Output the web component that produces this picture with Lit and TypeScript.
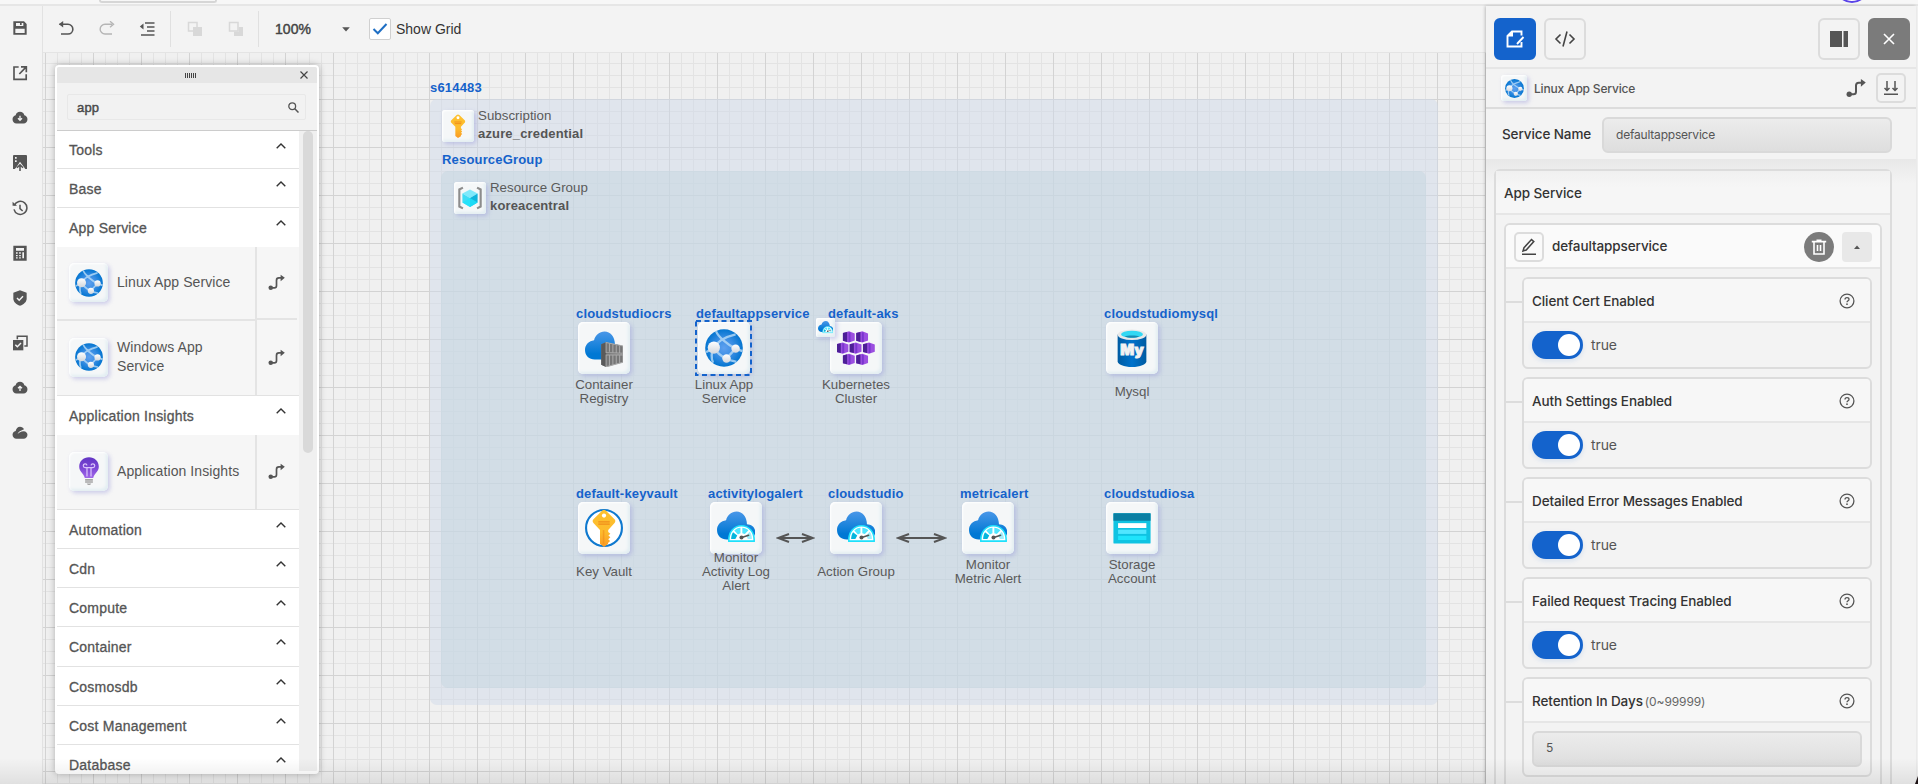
import { LitElement, html, svg, css, nothing } from "lit";
import { customElement } from "lit/decorators.js";
import { styleMap } from "lit/directives/style-map.js";

const cloud = svg`<path fill="url(#gc)" d="M14.2 7.2C14.1 3.6 12 1.2 9.3 1.2 6.8 1.2 4.9 2.9 4.3 5.3 1.9 5.6 0 7.4 0 9.9c0 2.7 2 4.5 4.6 4.5H14c2.4 0 4.1-1.4 4.1-3.6 0-2-1.6-3.500-3.900-3.600z"/>`;
const defs = svg`<defs>
  <linearGradient id="gc" x1="0" y1="0" x2="0" y2="1"><stop offset="0" stop-color="#4a97e8"/><stop offset=".8" stop-color="#0078d4"/></linearGradient>
  <radialGradient id="gw"><stop offset="0" stop-color="#5ea0ef"/><stop offset=".5" stop-color="#3b8ee4"/><stop offset="1" stop-color="#0375d0"/></radialGradient>
  <linearGradient id="gk" x1="0" y1="0" x2="0" y2="1"><stop offset="0" stop-color="#fdc12f"/><stop offset=".6" stop-color="#fdbb2c"/><stop offset="1" stop-color="#fa9a24"/></linearGradient>
  <linearGradient id="gp" x1="0" y1="0" x2="0" y2="1"><stop offset="0" stop-color="#6236c4"/><stop offset=".5" stop-color="#7c46d4"/><stop offset="1" stop-color="#a067ea"/></linearGradient>
  <linearGradient id="gm"><stop offset="0" stop-color="#005ba1"/><stop offset=".5" stop-color="#0072cc"/><stop offset="1" stop-color="#005ba1"/></linearGradient>
  <linearGradient id="gn" x1="0" y1="0" x2="0" y2="1"><stop offset="0" stop-color="#fff"/><stop offset="1" stop-color="#d2d6dc"/></linearGradient>
</defs>`;

const gauge = svg`<path fill="#fff" stroke="#1ee0fb" stroke-width=".75" d="M5.600 15.200C5.400 11 8 7.900 11.600 7.900s6.200 3.100 6 7.300z"/>
  <path fill="#05b6dd" d="M6.700 14.200c0-1.200.3-2.300.9-3.200l2 1.600-.9 1.600z"/><path fill="#50e6ff" d="M8.200 10.200c.8-.8 1.700-1.200 2.900-1.300v2.600l-1.200.6zM12 8.900c1.100.1 2 .5 2.900 1.200l-1.700 1.800-1.200-.4z"/><path fill="#9feefc" d="M15.500 10.800c.7.900 1 2 1 3.400h-1.900l-.8-1.800z"/>
  <path stroke="#555" stroke-width=".7" stroke-linecap="round" d="M11.700 13.500l3.300-1.100"/><circle cx="11.600" cy="13.500" r=".95" fill="#555"/>`;

const hexes: number[][] = [[3, 1], [9.300, 1], [0, 6.300], [6.200, 6.300], [12.500, 6.300], [3, 11.600], [9.300, 11.600]];

const pics: Record<string, unknown> = {
  web: svg`<circle cx="9" cy="9" r="8.900" fill="url(#gw)"/>
    <g fill="none" stroke="#b9dcf8" stroke-width="1.100" opacity=".8"><path d="M5.200 1c1 2.500 5 6.200 9.300 8.300M4.200 8.800c1.500-2.600 5-5 10.300-6.300M4.200 8.800c1.600 2.600 3.800 4.300 5.900 5.200M10.100 14l4.400-4.700M14.500 9.300l3.200 1.200M4.200 8.800L.5 11M10.100 14c1.500 1 3 1.200 4.800 1.500M4.200 8.800C3 11 3 14 3.800 16"/></g>
    <circle cx="4.200" cy="8.800" r="2.900" fill="url(#gn)"/><circle cx="14.500" cy="9.300" r="2" fill="url(#gn)"/><circle cx="10.200" cy="14" r="2" fill="url(#gn)"/>`,
  registry: svg`${cloud}<path fill="#767676" d="M7.700 7.200l2.300-.9 8 1.700v7.800l-8 2.200-2.300-1.100z"/><path fill="#5a5a5a" d="M7.700 7.200l2.300-.9v11.700l-2.300-1.100z"/>
    <path fill="none" stroke="#a8a8a8" stroke-width=".5" d="M10 6.400l8 1.700v3.400l-8-.4zM10 12.300l8-.1v3.500l-8 2.200zM11.600 7v3.800M13.200 7.300v3.700M14.800 7.700v3.400M16.400 8v3.400M11.600 12.500v4.700M13.200 12.500v4.300M14.800 12.500v3.900M16.400 12.400v3.600"/>`,
  aks: hexes.map(([x, y]) => svg`<g transform="translate(${x - 0.400} ${y - 0.100})"><path fill="#9b4fe0" d="M.2 1l2.900-.8 2.700 1v3.400l-2.700.9-2.900-.8z"/><path fill="#4c1f96" d="M.2 1l2-.5v4.700L.2 4.700z"/><path fill="#7a35cf" d="M2.900.6l.9.200v4.300l-.9.200z"/></g>`),
  mysql: svg`<path fill="url(#gm)" d="M2.200 2.600v12.800c0 1.400 3 2.600 6.800 2.600s6.800-1.200 6.800-2.600V2.600z"/><ellipse cx="9" cy="2.700" rx="6.800" ry="2.500" fill="#e8e8e8"/><ellipse cx="9" cy="2.500" rx="5.200" ry="1.700" fill="#32d8f3"/><path fill="#198ab3" d="M5.600 3.600c1-.7 5.800-.7 6.800 0-1.500.8-5.300.8-6.800 0z"/>
    <text x="9" y="12.100" text-anchor="middle" font-family="Inter, sans-serif" font-weight="900" font-size="6.900" fill="#f2f2f2" stroke="#f2f2f2" stroke-width=".4">My</text>`,
  vault: svg`<circle cx="9" cy="9" r="8.500" fill="#fff" stroke="#0f79cf" stroke-width="1"/><path fill="url(#gk)" d="M8.200.7c.5-.5 1.100-.5 1.600 0l4.200 4.200c.5.500.5 1.200 0 1.700L11 10v.9l1 .8-.9.8.9.9-1 .9.900.9-1 .9v.5L9 18l-1.900-1.500V10L4 6.600c-.5-.5-.5-1.200 0-1.700z"/><circle cx="9" cy="3.100" r="1" fill="#fff"/><path stroke="#f08d1a" stroke-width=".6" d="M6.300 6.100h5.400M6.300 7.200h5.400"/><path stroke="#f08d1a" stroke-width=".7" opacity=".6" d="M8.800 10v6.600"/>`,
  key: svg`<path fill="url(#gk)" d="M8 .7c.6-.5 1.400-.5 2 0l4 4c.5.500.5 1.400 0 1.900L11.200 9.600v1l.9.800-.8.800.8 1-.8.900.8.900-.9.900v.7L9 18l-2-1.500V9.600L4 6.600c-.5-.5-.5-1.400 0-1.900z"/><circle cx="9" cy="2.800" r="1.100" fill="#fff"/><path stroke="#f08d1a" stroke-width=".7" d="M6.300 6h5.400M6.600 7.200h4.800"/>`,
  monitor: svg`${cloud}${gauge}`,
  storage: svg`<rect x=".2" y="2" width="17.600" height="14.400" rx=".4" fill="#10c3e2"/><path fill="#0a7fa3" d="M.2 2h17.600v3.600H.2z"/><path fill="#fff" d="M2.400 6.700h13.400v2.300H2.400z"/><path fill="#50e6ff" d="M2.400 9.800h13.400v2H2.400z"/><path fill="#1fe4fb" d="M2.400 12.700h13.400v2H2.400z"/>`,
  group: svg`<path fill="none" stroke="#8c8c8c" stroke-width="1.600" d="M3.700 1.200L1 2.600v12.800l2.700 1.400M14.300 1.200L17 2.600v12.800l-2.700 1.400"/><path fill="#7fe9fb" d="M9 2.600l5.700 3.100L9 9 3.300 5.700z"/><path fill="#3fdcf5" d="M3.300 5.700L9 9v6.800l-5.700-3.400z"/><path fill="#0fb4dc" d="M14.700 5.700L9 9v6.800l5.700-3.400z"/><path fill="#1fe4fb" d="M3.300 12.400L9 9l5.700 3.400L9 15.800z" opacity=".8"/>`,
  bulb: svg`<path fill="url(#gp)" d="M15.300 6.300C15.300 2.800 12.600.2 9 .2S2.700 2.800 2.700 6.300c0 3.200 3 4.400 3.600 7.200h5.400c.6-2.800 3.600-4 3.600-7.200z"/><path fill="none" stroke="#d9c3fa" stroke-width=".8" d="M7.700 12.500V6.400M10.300 12.500V6.400M7.700 6.800H6.500a1.200 1.200 0 1 1 1.200-1.400M10.300 6.800h1.200a1.200 1.200 0 1 0-1.200-1.400M7.700 6.800h2.600"/><path fill="#a5a5a5" d="M6.500 14.200h5v1h-5zM6.500 15.600h5v1h-5zM7.500 17h3l-.8 1H8.300z"/>`,
};
const pic = (name: string) => html`<svg class="pic" viewBox="0 0 18 18">${defs}${pics[name]}</svg>`;

const cloudSolid = "M12 2.800c3.400 0 5.900 2.200 6.500 5.200 2.800.8 4.700 3 4.700 5.800 0 3.500-2.500 6.400-5.900 6.400H6.700C3.300 20.200.8 17.300.8 13.800.8 11 2.700 8.800 5.500 8 6.100 5 8.600 2.800 12 2.800z";
const rail = [
  svg`<path fill="currentColor" fill-rule="evenodd" d="M2 2h16l4 4v16H2zM6 4.500v4.500h11V4.500h-2.500V7.500H12v-3zM5 13v6.500h14V13z"/>`,
  svg`<path fill="none" stroke="currentColor" stroke-width="2.500" d="M10 3H3v18.500h18.300v-7.500M13.500 2.700h8v8M21 3.200L11 13.500"/>`,
  svg`<path fill="currentColor" d="${cloudSolid}"/><path stroke="#f3f3f3" fill="none" stroke-width="2" d="M12 8.500v7M9 12.500l3 3 3-3"/>`,
  svg`<path fill="currentColor" fill-rule="evenodd" d="M3 0h18a1.500 1.500 0 0 1 1.500 1.500V21H20l-8-11-6 9-2 2H1.500V1.500A1.500 1.500 0 0 1 3 0zM4.500 3v2.500H7V3zm0 5v2.500H7V8z"/><path stroke="currentColor" stroke-width="2.300" fill="none" d="M12 24v-8.500M7.500 19.200l4.500-4.500 4.500 4.500"/>`,
  svg`<path fill="none" stroke="currentColor" stroke-width="2.300" d="M3.500 8A9.800 9.800 0 1 1 3 14M12 7v6l4 3.500"/><path fill="currentColor" d="M.8 2.500l6.700 6.300H.8z"/>`,
  svg`<path fill="currentColor" fill-rule="evenodd" d="M2 1h20v22.500H2zM6 4.500v4h12v-4zM6 11v2h2.500v-2zm4.700 0v2h2.500v-2zM6 15v1.800h2.500V15zm4.700 0v1.800h2.500V15zM6 18.500v1.600h2.500v-1.600zm4.700 0v1.600h2.500v-1.600zM15.500 11v9H18v-9z"/>`,
  svg`<path fill="currentColor" d="M12 .5l10 3.500v8.700c0 5-4 8.800-10 11-6-2.200-10-6-10-11V4z"/><path fill="none" stroke="#f3f3f3" stroke-width="2.200" d="M7.500 12l3.300 3.300 5.700-6"/>`,
  svg`<path fill="currentColor" d="M1.500 7.500h15.500V23H1.500z"/><path fill="none" stroke="currentColor" stroke-width="2.300" d="M8 6.500V2h14.500v14.500h-4"/><path fill="none" stroke="#f3f3f3" stroke-width="2.200" d="M5 14.700l3 3 5.500-5.700"/>`,
  svg`<path fill="currentColor" d="${cloudSolid}"/><path stroke="#f3f3f3" fill="none" stroke-width="2" d="M12 16.500v-7M9 12.500l3-3 3 3"/>`,
  svg`<path fill="currentColor" d="M12 2.500c2.800 0 5 1.500 6 4l-5.500 2.500c-2 1-3.300 2.500-4 4.500 2-2.500 4.500-3.800 9-4.300 3.500.2 5.700 2.500 5.700 5.600 0 3.200-2.500 6-5.900 6H6.700c-3.400 0-5.900-2.800-5.900-6 0-3 1.900-5.200 4.700-5.700C6 5.500 8.700 2.500 12 2.500z"/>`,
];
const link = html`<svg class="link" viewBox="0 0 18 18"><path fill="none" stroke="currentColor" stroke-width="1.800" d="M2.500 14.700h4.200c1.800 0 2.300-.8 2.300-2.300V6.800c0-1.700.7-2.600 2.500-2.600h3.300"/><circle cx="2.900" cy="14.600" r="2.400" fill="currentColor"/><path fill="currentColor" d="M13.400.8l4.400 3.300-4.400 3.700z"/></svg>`;
const chevron = html`<svg class="chev" viewBox="0 0 10 6"><path d="M.7 5.300L5 1l4.300 4.300" fill="none" stroke="#333" stroke-width="1.400"/></svg>`;
const help = html`<svg class="help" viewBox="0 0 16 16"><circle cx="8" cy="8" r="6.900" fill="none" stroke="#555" stroke-width="1.300"/><path d="M6 6.600c0-1.200.9-1.900 2-1.900s2 .7 2 1.700c0 1.300-2 1.500-2 2.900" fill="none" stroke="#555" stroke-width="1.300"/><circle cx="8" cy="11.200" r=".85" fill="#555"/></svg>`;

interface Item { pic: string; name: string }
interface Section { title: string; items?: Item[]; tall?: boolean }
const sections: Section[] = [
  { title: "Tools" }, { title: "Base" },
  { title: "App Service", items: [{ pic: "web", name: "Linux App Service" }, { pic: "web", name: "Windows App Service" }] },
  { title: "Application Insights", items: [{ pic: "bulb", name: "Application Insights" }] },
  { title: "Automation" }, { title: "Cdn" }, { title: "Compute" }, { title: "Container", tall: true },
  { title: "Cosmosdb" }, { title: "Cost Management" }, { title: "Database" },
];

interface GNode { x: number; y: number; name: string; pic: string; lines: string[]; selected?: boolean; badge?: string }
const nodes: GNode[] = [
  { x: 535, y: 269, name: "cloudstudiocrs", pic: "registry", lines: ["Container", "Registry"] },
  { x: 655, y: 269, name: "defaultappservice", pic: "web", lines: ["Linux App", "Service"], selected: true },
  { x: 787, y: 269, name: "default-aks", pic: "aks", lines: ["Kubernetes", "Cluster"], badge: "monitor" },
  { x: 1063, y: 269, name: "cloudstudiomysql", pic: "mysql", lines: ["Mysql"] },
  { x: 535, y: 449, name: "default-keyvault", pic: "vault", lines: ["Key Vault"] },
  { x: 667, y: 449, name: "activitylogalert", pic: "monitor", lines: ["Monitor", "Activity Log", "Alert"] },
  { x: 787, y: 449, name: "cloudstudio", pic: "monitor", lines: ["Action Group"] },
  { x: 919, y: 449, name: "metricalert", pic: "monitor", lines: ["Monitor", "Metric Alert"] },
  { x: 1063, y: 449, name: "cloudstudiosa", pic: "storage", lines: ["Storage", "Account"] },
];
const arrows = [{ x: 733, w: 39 }, { x: 853, w: 51 }];
const fields = ["Client Cert Enabled", "Auth Settings Enabled", "Detailed Error Messages Enabled", "Failed Request Tracing Enabled"];

const at = (x: number, y: number) => styleMap({ left: `${x}px`, top: `${y}px` });

@customElement("app-root")
export class AppRoot extends LitElement {
  static styles = css`
    :host { display: flex; flex-direction: column; position: relative; width: 1918px; height: 784px; overflow: hidden; background: #f3f3f3; font: 14px/19px "Liberation Sans", Arial, sans-serif; color: #555; }
    * { box-sizing: border-box; }
    svg { display: block; flex: none; }
    .top { height: 6px; flex: none; background: #f7f7f7; border-bottom: 2px solid #e6e6e6; padding-left: 99px; position: relative; }
    .tab { width: 118px; height: 3px; border: 1px solid #d6d6d6; border-width: 0 2px 2px; border-radius: 0 0 5px 5px; }
    .avatar { position: absolute; left: 1835px; top: -31px; width: 34px; height: 34px; border: 2px solid #5a43e8; border-radius: 50%; background: #fff; }
    .main { flex: 1; min-height: 0; display: flex; }
    .rail { width: 43px; border-right: 1px solid #e2e2e2; display: flex; flex-direction: column; align-items: center; padding: 14px 3px 0 0; gap: 29px; flex: none; }
    .rail svg { width: 16px; height: 16px; }
    .work { width: 1443px; flex: none; display: flex; flex-direction: column; }
    .bar { height: 47px; flex: none; display: flex; align-items: center; border-bottom: 1px solid #e4e4e4; color: #333; }
    .bar svg { width: 16px; height: 16px; color: #555; }
    .undo { margin-left: 15px; } .redo { margin-left: 25px; } .outdent { margin: 0 15px 0 24px; } .front { margin-left: 16px; } .back { margin: 0 14px 0 25px; }
    .bar .drop { width: 8px; height: 5px; }
    .sep { width: 1px; height: 36px; background: #e0e0e0; }
    .zoomv { margin-left: 16px; width: 67px; font-size: 14px; -webkit-text-stroke: .45px #444; color: #444; letter-spacing: .05px; }
    .check { width: 22px; height: 22px; border: 1px solid #d0d0d0; border-radius: 2px; background: #fff; display: grid; place-items: center; margin: 0 5px 0 19px; }
    .canvas { flex: 1; position: relative; overflow: hidden; background-color: #f0f0f0;
      background-image: linear-gradient(90deg, #d3d3d3 1px, transparent 1px), linear-gradient(#d3d3d3 1px, transparent 1px), linear-gradient(90deg, #e3e3e3 1px, transparent 1px), linear-gradient(#e3e3e3 1px, transparent 1px);
      background-size: 48px 48px, 48px 48px, 12px 12px, 12px 12px; background-position: 2px 46px, 2px 46px, 2px 10px, 2px 10px; }
    .group { position: absolute; border-radius: 7px; }
    .outer { left: 387px; top: 46px; width: 1008px; height: 606px; background: rgba(208,218,234,.5); }
    .inner { left: 398px; top: 118px; width: 985px; height: 517px; background: rgba(196,213,224,.5); }
    .node { position: absolute; }
    .title { position: absolute; left: -2px; top: -16px; font-size: 13px; font-weight: bold; line-height: 16px; letter-spacing: .18px; color: #1562cb; white-space: nowrap; }
    .tile { display: grid; place-items: center; background: #f5f7f8; box-shadow: inset 1px 1px 2px #fff, inset -2px -2px 3px #e2eef2, 2px 2px 4px rgba(140,140,215,.4); border-radius: 5px; }
    .n { width: 52px; height: 52px; } .n .pic { width: 38px; height: 38px; margin-top: -1px; }
    .g { width: 32px; height: 32px; border-radius: 3px; } .g .pic { width: 24px; height: 24px; margin-left: -1px; }
    .p { width: 39px; height: 39px; flex: none; } .p .pic { width: 28px; height: 28px; }
    .s { width: 26px; height: 26px; border-radius: 3px; } .s .pic { width: 19px; height: 19px; }
    .badge { position: absolute; left: -14px; top: -4px; width: 19px; height: 19px; border-radius: 2px; } .badge .pic { width: 15px; height: 15px; }
    .sel { position: absolute; left: -3px; top: -2px; width: 57px; height: 56px; }
    .cap { position: absolute; left: -24px; width: 100px; top: 49px; height: 42px; display: flex; flex-direction: column; justify-content: center; text-align: center; font-size: 13.300px; line-height: 14px; color: #5a5a5a; }
    .gname { position: absolute; left: 36px; top: -3px; font-size: 13.300px; line-height: 18px; letter-spacing: .02px; white-space: nowrap; color: #5a5a5a; }
    .gname b { display: block; font-size: 13px; letter-spacing: .16px; color: #555; }
    .arrow { position: absolute; top: 480px; }
    .palette { position: absolute; left: 55px; top: 65px; width: 264px; height: 709px; border: 2px solid #fff; border-bottom-width: 3px; border-radius: 4px; background: #f2f2f2; box-shadow: 0 0 7px rgba(0,0,0,.28); display: flex; flex-direction: column; overflow: hidden; }
    .phead { height: 16px; flex: none; background: #e6e6e6; display: flex; align-items: center; justify-content: flex-end; padding-right: 9px; gap: 104px; }
    .grip { width: 11px; height: 5px; background: repeating-linear-gradient(90deg, #444 0 1px, transparent 1px 2px); }
    .search { height: 48px; flex: none; padding: 11px 11px 0 10px; border-bottom: 1px solid #ccc; }
    .sbox { height: 26px; border: 1px solid #e8e8e8; border-radius: 2px; display: flex; align-items: center; justify-content: space-between; padding: 0 6px 0 9px; color: #4a4a4a; -webkit-text-stroke: .45px #4a4a4a; font-size: 13px; letter-spacing: .2px; }
    .plist { flex: 1; min-height: 0; display: flex; }
    .scroll { width: 242px; overflow: hidden; flex: none; }
    .track { flex: 1; background: #f0f0f0; padding-left: 4px; } .thumb { width: 10px; height: 322px; border-radius: 5px; background: #d9d9d9; }
    .sec { height: 39px; background: #fff; border-bottom: 1px solid #e2e2e2; display: flex; justify-content: space-between; padding: 11px 13px 0 12px; -webkit-text-stroke: .3px #555; letter-spacing: .22px; }
    .sec.first { height: 38px; padding-top: 10px; } .sec.tall { height: 40px; } .sec.open { border-color: #fff; }
    .chev { width: 10px; height: 6px; margin-top: 1px; } .first .chev { margin-top: 2px; }
    .item { height: 75px; display: flex; background: #f6f6f6; border-bottom: 1px solid #e2e2e2; letter-spacing: .08px; }
    .item.more { border: 0; height: 74px; }
    .cell { width: 200px; border-right: 2px solid #e4e4e4; padding: 0 14px 2px 12px; display: flex; align-items: center; gap: 9px; }
    .more .cell { border-bottom: 2px solid #e4e4e4; padding-bottom: 1px; } .more .go { border-bottom: 2px solid #e4e4e4; height: 73px; flex: none; width: 40px; }
    .cell span { margin-right: -8px; }
    .go { width: 42px; padding: 0 0 1px 11px; display: flex; align-items: center; } .go .link { width: 17px; height: 17px; }
    .wrap { max-width: 100px; }
    .side { width: 430px; flex: none; background: #f3f3f3; box-shadow: -1px 0 3px rgba(0,0,0,.22); position: relative; display: flex; flex-direction: column; font-family: Inter, sans-serif; font-size: 13.500px; font-weight: 500; color: #333; letter-spacing: -.1px; }
    .r1 { height: 63px; flex: none; display: flex; gap: 8px; padding: 12px 6px 0 8px; border-bottom: 2px solid #e6e6e6; }
    .btn { width: 42px; height: 42px; border: 2px solid #dcdcdc; border-radius: 6px; display: grid; place-items: center; color: #555; }
    .btn.blue { background: #1463cc; border-color: #1463cc; color: #fff; } .btn.dark { background: #7b7b7b; border-color: #7b7b7b; }
    .push { flex: 1; }
    .r2 { height: 40px; flex: none; display: flex; align-items: center; padding: 0 10px 0 15px; border-bottom: 2px solid #dcdcdc; font-size: 12px; color: #555; letter-spacing: -.18px; }
    .r2 span { margin-left: 7px; } .r2 .link { width: 20px; height: 20px; margin-right: 10px; }
    .mini { width: 30px; height: 30px; border: 2px solid #dcdcdc; border-radius: 5px; display: grid; place-items: center; flex: none; }
    .r3 { height: 50px; flex: none; display: flex; align-items: center; padding: 1px 24px 0 16px; color: #333; }
    .r3 span { width: 100px; }
    .input { flex: 1; height: 36px; border: 2px solid #d9d9d9; border-radius: 6px; background: linear-gradient(#ececec, #dedede); font-size: 12px; font-weight: 400; line-height: 31px; padding-left: 12px; color: #555; letter-spacing: -.2px; }
    .body { flex: 1; min-height: 0; overflow: hidden; padding: 10px 24px 0 8px; background: linear-gradient(#e8e8e8, #f3f3f3 24px); }
    .card { border: 2px solid #dcdcdc; border-radius: 6px; height: 800px; }
    .ct { height: 44px; line-height: 44px; padding-left: 8px; border-bottom: 2px solid #e6e6e6; background: linear-gradient(#f0f0f0, #f6f6f6 16px); }
    .inst { margin: 8px 8px 0 8px; border: 2px solid #dcdcdc; border-radius: 6px; height: 700px; }
    .ih { height: 44px; border-bottom: 2px solid #e6e6e6; background: #fafafa; display: flex; align-items: center; padding: 1px 8px 0; border-radius: 4px 4px 0 0; }
    .ih span { flex: 1; margin-left: 8px; }
    .trash { width: 30px; height: 30px; border-radius: 50%; background: #7b7b7b; display: grid; place-items: center; margin-right: 8px; }
    .caret { width: 30px; height: 30px; border-radius: 4px; background: #e8e8e8; display: grid; place-items: center; }
    .f { display: flex; margin: 8px 8px 0 0; height: 92px; } .f.big { height: 100px; }
    .stub { width: 16px; height: 2px; margin-top: 24px; background: #dcdcdc; flex: none; }
    .fc { flex: 1; border: 2px solid #dcdcdc; border-radius: 6px; background: #f3f3f3; }
    .fh { height: 44px; border-bottom: 2px solid #e6e6e6; background: #f7f7f7; display: flex; align-items: center; justify-content: space-between; padding: 2px 15px 0 8px; border-radius: 4px 4px 0 0; }
    .help { width: 16px; height: 16px; }
    .fh small { font-size: 12px; font-weight: 400; color: #666; letter-spacing: -.1px; margin-left: 2px; }
    .fb { padding: 8px; display: flex; align-items: center; gap: 8px; font-size: 14px; line-height: 18px; font-weight: 400; color: #555; letter-spacing: -.1px; }
    .fb .input { line-height: 30px; }
    .tog { width: 51px; height: 28px; border-radius: 14px; background: #1463cc; padding: 3px; display: flex; justify-content: flex-end; box-shadow: 0 2px 5px rgba(20,99,204,.12); } .tog i { width: 22px; height: 22px; border-radius: 50%; background: #fff; }
    .shade { position: absolute; left: 0; right: 0; bottom: 0; height: 26px; background: linear-gradient(transparent, rgba(0,0,0,.08)); pointer-events: none; }
    .corner { position: absolute; right: 0; bottom: 0; width: 3px; height: 8px; background: #1c1214; clip-path: polygon(100% 0, 100% 100%, 0 100%); }
  `;

  private section(s: Section, i: number) {
    return html`<div class="sec ${i === 0 ? "first" : ""} ${s.tall ? "tall" : ""} ${s.items ? "open" : ""}"><span>${s.title}</span>${chevron}</div>
      ${(s.items ?? []).map((it, k, all) => html`<div class="item ${k < all.length - 1 ? "more" : ""}"><div class="cell"><div class="tile p">${pic(it.pic)}</div><span class=${it.name.startsWith("Windows") ? "wrap" : ""}>${it.name}</span></div><div class="go">${link}</div></div>`)}`;
  }

  private node(n: GNode) {
    return html`<div class="node" style=${at(n.x, n.y)}><div class="tile n">${pic(n.pic)}</div>
      ${n.selected ? html`<svg class="sel" viewBox="0 0 57 56"><rect x="1" y="1" width="55" height="54" fill="none" stroke="#1463cc" stroke-width="2" stroke-dasharray="5 3.500"/></svg>` : nothing}
      ${n.badge ? html`<div class="tile badge">${pic(n.badge)}</div>` : nothing}
      <div class="title">${n.name}</div><div class="cap">${n.lines.map((l) => html`<div>${l}</div>`)}</div></div>`;
  }

  render() {
    return html`
      <div class="top"><div class="tab"></div><div class="avatar"></div></div>
      <div class="main">
        <nav class="rail">${rail.map((r) => html`<svg viewBox="0 0 24 24">${r}</svg>`)}</nav>
        <div class="work">
          <div class="bar">
            <svg class="undo" viewBox="0 0 16 16"><path d="M1.500 3.300H10a4.800 4.800 0 0 1 0 9.700H3" fill="none" stroke="#555" stroke-width="1.600"/><path fill="#555" d="M5.200 0v6.600L.8 3.300z"/></svg>
            <svg class="redo" viewBox="0 0 16 16"><path d="M13 3.300H6a4.800 4.800 0 0 0 0 9.700h7" fill="none" stroke="#b5b5b5" stroke-width="1.400"/><path d="M11 .3l3.500 3L11 6.300" fill="none" stroke="#b5b5b5" stroke-width="1.400"/></svg>
            <svg class="outdent" viewBox="0 0 16 16"><path d="M6 2h9.500M8 6h7.500M8 10h7.500M2 14h13.500" stroke="#555" stroke-width="1.500"/><path fill="#555" d="M4.500 2.500v6L.8 5.500z"/></svg>
            <div class="sep"></div>
            <svg class="front" viewBox="0 0 16 16"><rect x="1.500" y="1.500" width="8.500" height="8.500" fill="none" stroke="#d8d8d8" stroke-width="1.500"/><path fill="#d8d8d8" d="M6 6h9v9H6z"/></svg>
            <svg class="back" viewBox="0 0 16 16"><path fill="none" stroke="#d8d8d8" stroke-width="1.500" d="M1.500 1.500H10V10H1.500z"/><path fill="#d8d8d8" d="M10.800 6H15v9H6v-4.200h4.800z"/></svg>
            <div class="sep"></div>
            <span class="zoomv">100%</span>
            <svg class="drop" viewBox="0 0 8 5"><path fill="#555" d="M.2.300h7.600L4 4.500z"/></svg>
            <div class="check"><svg viewBox="0 0 16 16"><path d="M1.500 8l4.300 4.300L14.500 3" fill="none" stroke="#1f6fc4" stroke-width="2"/></svg></div>
            <span>Show Grid</span>
          </div>
          <div class="canvas">
            <div class="group outer"></div><div class="group inner"></div>
            <div class="node" style=${at(399, 57)}><div class="tile g">${pic("key")}</div><div class="title" style=${at(-12, -30)}>s614483</div><div class="gname">Subscription<b>azure_credential</b></div></div>
            <div class="node" style=${at(411, 129)}><div class="tile g">${pic("group")}</div><div class="title" style=${at(-12, -30)}>ResourceGroup</div><div class="gname">Resource Group<b>koreacentral</b></div></div>
            ${arrows.map((a) => html`<svg class="arrow" style=${styleMap({ left: `${a.x}px` })} width=${a.w} height="10"><path d="M2 5H${a.w - 2}M13 1L2 5l11 4M${a.w - 13} 1L${a.w - 2} 5l-11 4" fill="none" stroke="#555" stroke-width="2"/></svg>`)}
            ${nodes.map((n) => this.node(n))}
          </div>
        </div>
        <aside class="side">
          <div class="r1">
            <div class="btn blue"><svg width="20" height="20" viewBox="0 0 20 20"><path d="M16.500 6.500V2.500H7L2.500 7v10.500h14V13" fill="none" stroke="#fff" stroke-width="1.900"/><path fill="#fff" d="M2.500 7.500V6.500l4-4h1.500v5z"/><path d="M18.500 8l-6.500 7" stroke="#fff" stroke-width="1.900"/></svg></div>
            <div class="btn"><svg width="22" height="18" viewBox="0 0 22 18"><path d="M6.500 4.500L2 9l4.500 4.500M15.500 4.500L20 9l-4.500 4.500M13 1.500L9 16.500" fill="none" stroke="#444" stroke-width="1.600"/></svg></div>
            <div class="push"></div>
            <div class="btn"><svg width="18" height="16"><path fill="#555" d="M0 0h12v16H0zM13.500 0H18v16h-4.500z"/></svg></div>
            <div class="btn dark"><svg width="12" height="12"><path d="M1 1l10 10M11 1L1 11" stroke="#fff" stroke-width="1.600"/></svg></div>
          </div>
          <div class="r2"><div class="tile s">${pic("web")}</div><span>Linux App Service</span><div class="push"></div>${link}
            <div class="mini"><svg width="14" height="14" viewBox="0 0 14 14"><path d="M3 0v9M.5 7L3 9.500 5.500 7M11 0v9M8.500 7L11 9.500 13.500 7M0 13.200h14" fill="none" stroke="#555" stroke-width="1.500"/></svg></div></div>
          <div class="r3"><span>Service Name</span><div class="input">defaultappservice</div></div>
          <div class="body"><div class="card"><div class="ct">App Service</div>
            <div class="inst">
              <div class="ih"><div class="mini"><svg width="16" height="18" viewBox="0 0 16 18"><path d="M2 13l1-3.300L10.500 1.500l2.300 2.100L5.200 12zM1 16.200h14" fill="none" stroke="#444" stroke-width="1.500"/></svg></div><span>defaultappservice</span>
                <div class="trash"><svg width="16" height="16" viewBox="0 0 16 16"><path d="M.8 2.600h14.400M5.500 1.400h5M3 3v12h10V3M6.500 6v6M9.500 6v6" fill="none" stroke="#fff" stroke-width="1.600"/></svg></div>
                <div class="caret"><svg width="6" height="4"><path fill="#555" d="M0 4h6L3 .5z"/></svg></div></div>
              ${fields.map((f) => html`<div class="f"><div class="stub"></div><div class="fc"><div class="fh"><span>${f}</span>${help}</div><div class="fb"><div class="tog"><i></i></div>true</div></div></div>`)}
              <div class="f big"><div class="stub"></div><div class="fc"><div class="fh"><span>Retention In Days<small>(0~99999)</small></span>${help}</div><div class="fb"><div class="input">5</div></div></div></div>
            </div></div></div>
        </aside>
      </div>
      <div class="palette">
        <div class="phead"><div class="grip"></div><svg width="8" height="8"><path d="M.5.500l7 7M7.500.500l-7 7" stroke="#444" stroke-width="1.200"/></svg></div>
        <div class="search"><div class="sbox"><span>app</span><svg width="11" height="11" viewBox="0 0 11 11"><circle cx="4.200" cy="4.200" r="3.400" fill="none" stroke="#555" stroke-width="1.300"/><path d="M6.800 6.800l3.700 3.700" stroke="#555" stroke-width="1.500"/></svg></div></div>
        <div class="plist"><div class="scroll">${sections.map((s, i) => this.section(s, i))}</div><div class="track"><div class="thumb"></div></div></div>
      </div>
      <div class="shade"></div><div class="corner"></div>`;
  }
}
